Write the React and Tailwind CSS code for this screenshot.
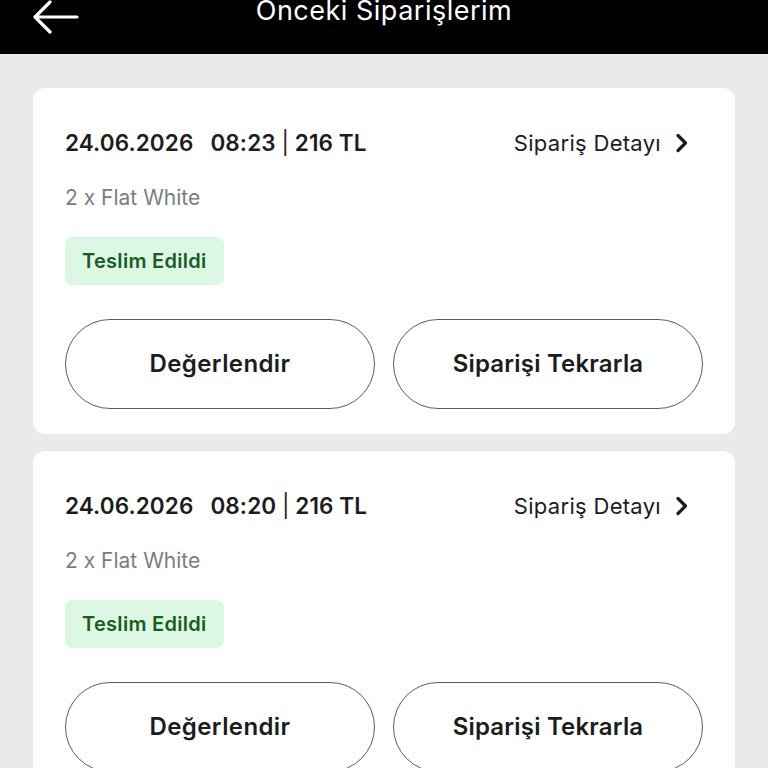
import React from 'react';

const orders = [
  { id: 1, date: '24.06.2026', time: '08:23', total: '216 TL', items: '2 x Flat White', status: 'Teslim Edildi' },
  { id: 2, date: '24.06.2026', time: '08:20', total: '216 TL', items: '2 x Flat White', status: 'Teslim Edildi' },
];

function OrderCard({ order }) {
  return (
    <div className="bg-white rounded-[12px] px-[32px] pt-[40px] pb-[25px]">
      <div className="flex items-center justify-between h-[30px]">
        <span className="text-[22.5px] font-semibold text-[#1c1c1e] tracking-[0.1px]">
          {order.date}
          <span className="inline-block w-[17px]" />
          {order.time} <span className="font-normal">|</span> {order.total}
        </span>
        <button type="button" className="flex items-center gap-[14px] mr-[14px] text-[22px] text-[#1c1c1e] tracking-[0.3px]">
          Sipariş Detayı
          <svg width="14" height="20" viewBox="0 0 14 20" fill="none">
            <path d="M3 2.5L10.5 10L3 17.5" stroke="#1c1c1e" strokeWidth="3.2" strokeLinecap="round" strokeLinejoin="round" />
          </svg>
        </button>
      </div>
      <p className="mt-[25px] text-[21px] text-[#7a7d85] leading-[30px]">{order.items}</p>
      <div className="mt-[24px]">
        <span className="inline-flex items-center h-[48px] px-[17px] rounded-[7px] bg-[#dcf8e4] text-[#1a5c24] text-[20px] font-semibold tracking-[0.3px]">
          {order.status}
        </span>
      </div>
      <div className="mt-[34px] grid grid-cols-2 gap-[18px]">
        <button type="button" className="h-[90px] rounded-full border border-[#5c5c5c] text-[24px] font-semibold text-[#1c1c1e] tracking-[0.4px]">
          Değerlendir
        </button>
        <button type="button" className="h-[90px] rounded-full border border-[#5c5c5c] text-[24px] font-semibold text-[#1c1c1e] tracking-[0.2px]">
          Siparişi Tekrarla
        </button>
      </div>
    </div>
  );
}

export default function App() {
  return (
    <div className="min-h-[768px] bg-[#e9eaec] overflow-hidden" style={{ fontFamily: 'Inter, "Noto Sans", sans-serif' }}>
      <header className="relative h-[54px] bg-black flex justify-center">
        <svg className="absolute left-[31px] top-0" width="50" height="36" viewBox="0 0 50 36" fill="none">
          <path d="M19 2L4 17L19 32M4 17H46" stroke="white" strokeWidth="3.2" strokeLinecap="round" strokeLinejoin="round" />
        </svg>
        <h1 className="text-white text-[27px] leading-none mt-[-3px] tracking-[0.5px]">Önceki Siparişlerim</h1>
      </header>
      <main className="px-[33px] pt-[34px] flex flex-col gap-[17px]">
        {orders.map((o) => (
          <OrderCard key={o.id} order={o} />
        ))}
      </main>
    </div>
  );
}
